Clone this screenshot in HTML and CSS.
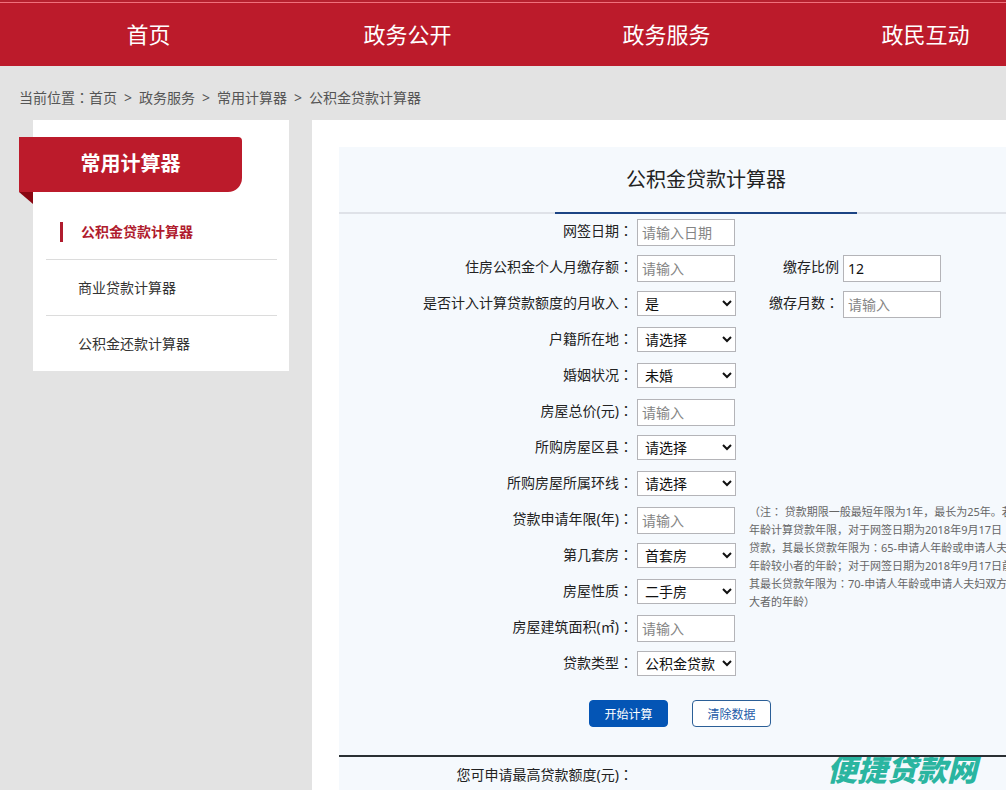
FILE: index.html
```html
<!DOCTYPE html>
<html lang="zh">
<head>
<meta charset="utf-8">
<title>公积金贷款计算器</title>
<link rel="stylesheet" href="styles.css">
</head>
<body>
<nav class="nav">
  <div class="nav-items">
    <a href="#">首页</a>
    <a href="#">政务公开</a>
    <a href="#">政务服务</a>
    <a href="#">政民互动</a>
  </div>
</nav>
<div class="site">
  <div class="crumbs">
    <span>当前位置<span class="colon" lang="zh-TW">：</span><a href="#">首页</a></span>
    <span>&gt;</span><a href="#">政务服务</a>
    <span>&gt;</span><a href="#">常用计算器</a>
    <span>&gt;</span><a href="#">公积金贷款计算器</a>
  </div>
  <div class="columns">
    <aside class="side">
      <h2 class="ribbon">常用计算器</h2>
      <ul class="menu">
        <li><a class="current" href="#">公积金贷款计算器</a></li>
        <li><a href="#">商业贷款计算器</a></li>
        <li><a href="#">公积金还款计算器</a></li>
      </ul>
    </aside>
    <main class="panel">
      <div class="calc">
        <header class="calc-head"><h1>公积金贷款计算器</h1></header>
        <form>
          <div class="fields">
            <label for="date">网签日期<span class="colon" lang="zh-TW">：</span></label>
            <input id="date" type="text" placeholder="请输入日期">
            <label for="pay">住房公积金个人月缴存额<span class="colon" lang="zh-TW">：</span></label>
            <input id="pay" type="text" placeholder="请输入">
            <label class="second" for="ratio">缴存比例</label>
            <input id="ratio" type="text" value="12">
            <label for="income">是否计入计算贷款额度的月收入<span class="colon" lang="zh-TW">：</span></label>
            <select id="income"><option>是</option></select>
            <label class="second" for="months">缴存月数<span class="colon" lang="zh-TW">：</span></label>
            <input id="months" type="text" placeholder="请输入">
            <label for="place">户籍所在地<span class="colon" lang="zh-TW">：</span></label>
            <select id="place"><option>请选择</option></select>
            <label for="marriage">婚姻状况<span class="colon" lang="zh-TW">：</span></label>
            <select id="marriage"><option>未婚</option></select>
            <label for="price">房屋总价(元)<span class="colon" lang="zh-TW">：</span></label>
            <input id="price" type="text" placeholder="请输入">
            <label for="district">所购房屋区县<span class="colon" lang="zh-TW">：</span></label>
            <select id="district"><option>请选择</option></select>
            <label for="ring">所购房屋所属环线<span class="colon" lang="zh-TW">：</span></label>
            <select id="ring"><option>请选择</option></select>
            <label for="years">贷款申请年限(年)<span class="colon" lang="zh-TW">：</span></label>
            <input id="years" type="text" placeholder="请输入">
            <label for="nth">第几套房<span class="colon" lang="zh-TW">：</span></label>
            <select id="nth"><option>首套房</option></select>
            <label for="kind">房屋性质<span class="colon" lang="zh-TW">：</span></label>
            <select id="kind"><option>二手房</option></select>
            <label for="area">房屋建筑面积(㎡)<span class="colon" lang="zh-TW">：</span></label>
            <input id="area" type="text" placeholder="请输入">
            <label for="loan">贷款类型<span class="colon" lang="zh-TW">：</span></label>
            <select id="loan"><option>公积金贷款</option></select>
            <p class="note">（注<span class="colon" lang="zh-TW">：</span> 贷款期限一般最短年限为1年，最长为25年。若<br>年龄计算贷款年限，对于网签日期为2018年9月17日（<br>贷款，其最长贷款年限为<span class="colon" lang="zh-TW">：</span>65-申请人年龄或申请人夫妇<br>年龄较小者的年龄；对于网签日期为2018年9月17日前<br>其最长贷款年限为<span class="colon" lang="zh-TW">：</span>70-申请人年龄或申请人夫妇双方中<br>大者的年龄）</p>
          </div>
          <div class="actions">
            <button class="primary" type="button">开始计算</button>
            <button type="reset">清除数据</button>
          </div>
        </form>
        <div class="result">
          <span class="result-label">您可申请最高贷款额度(元)<span class="colon" lang="zh-TW">：</span></span>
        </div>
      </div>
    </main>
  </div>
</div>
<div class="watermark">便捷贷款网</div>
</body>
</html>
```
FILE: styles.css
```css
* { box-sizing: border-box; }
html { overflow: hidden; }
body {
  margin: 0;
  min-height: 100vh;
  background: #e3e3e3;
  color: #222;
  font: 14px/20px "Noto Sans", "Noto Sans CJK SC", sans-serif;
  overflow: hidden;
}
a { color: inherit; text-decoration: none; }
.colon { font-family: "Noto Sans CJK TC", sans-serif; line-height: 1; }

.nav {
  height: 66px;
  padding: 3px 0 0 19px;
  background: linear-gradient(#b5202e 2px, #f0707c 2px, #f0707c 3px, #bc1b2b 3px);
  color: #fff;
}
.nav-items { display: flex; }
.nav-items a { flex: 0 0 259px; text-align: center; font-size: 22px; line-height: 62px; }

.site { min-width: 1100px; padding-left: 19px; }
.crumbs { display: flex; gap: 7px; padding: 22px 0 12px; color: #555; }

.columns { display: flex; align-items: flex-start; gap: 23px; padding-left: 14px; }
.side { flex: 0 0 256px; padding: 17px 0 0; background: #fff; }
.ribbon {
  position: relative;
  width: 223px;
  margin: 0 0 0 -14px;
  border-radius: 0 4px 14px 0;
  background: #bc1b2b;
  color: #fff;
  font-size: 20px;
  line-height: 53px;
  height: 55px;
  text-align: center;
}
.ribbon::after {
  content: "";
  position: absolute;
  left: 0;
  top: 100%;
  border-top: 12px solid #8a0712;
  border-left: 14px solid transparent;
}
.menu { list-style: none; margin: 12px 12px 0 13px; padding: 0; }
.menu li { padding: 18px 0 17px; border-bottom: 1px solid #dcdcdc; }
.menu li:last-child { border-bottom: 0; }
.menu a { display: block; padding-left: 32px; color: #333; }
.menu a.current { margin-left: 14px; padding-left: 18px; border-left: 3px solid #b01c2e; color: #b01c2e; font-weight: 600; }

.panel { flex: 1; padding: 27px 27px 0; background: #fff; }
.calc { background: #f5f9fd; }
.calc-head { display: flex; justify-content: center; border-bottom: 2px solid #dfe2e8; }
.calc-head h1 {
  width: 302px;
  margin: 0 0 -2px;
  border-bottom: 2px solid #1c4484;
  font-size: 20px;
  font-weight: 400;
  line-height: 65px;
  text-align: center;
}
.fields {
  display: grid;
  grid-template-columns: 298px 99px 107px 98px;
  grid-auto-rows: 36px;
  padding-top: 1px;
}
.fields label { grid-column: 1; padding-right: 4px; text-align: right; line-height: 32px; color: #222; }
.fields label.second { grid-column: 3; }
.fields input, .fields select {
  width: 98px;
  height: 27px;
  margin: 4px 0 0;
  border: 1px solid #b4b4b8;
  border-radius: 0;
  background: #fff;
  color: #111;
  font: inherit;
  padding: 0 4px;
}
.fields select { width: 99px; height: 25px; padding: 0 0 0 3px; }
.fields input::placeholder { color: #858585; }
.note {
  grid-column: 3 / 5;
  grid-row: 9 / span 3;
  margin: 0 0 0 13px;
  color: #666;
  font-size: 11px;
  line-height: 18px;
  white-space: nowrap;
}
.actions { display: flex; gap: 24px; padding: 17px 0 28px 250px; }
.actions button {
  width: 79px;
  height: 27px;
  padding: 0;
  border: 1px solid #2b5f97;
  border-radius: 4px;
  background: #fff;
  color: #1d5ca8;
  font: 12px/20px "Noto Sans CJK SC", sans-serif;
}
.actions .primary { border-color: #0455b5; background: #0455b5; color: #fff; }
.result { padding-bottom: 5px; }
.result::before {
  content: "";
  display: block;
  position: relative;
  z-index: 2;
  height: 2px;
  margin-bottom: 8px;
  background: #2a2f33;
}
.result-label { display: block; width: 298px; padding-right: 4px; text-align: right; }

.watermark {
  position: absolute;
  z-index: 1;
  right: 29px;
  bottom: 3px;
  color: #2ab5a0;
  font: italic 900 30px/38px "Noto Sans CJK SC", sans-serif;
}
```
